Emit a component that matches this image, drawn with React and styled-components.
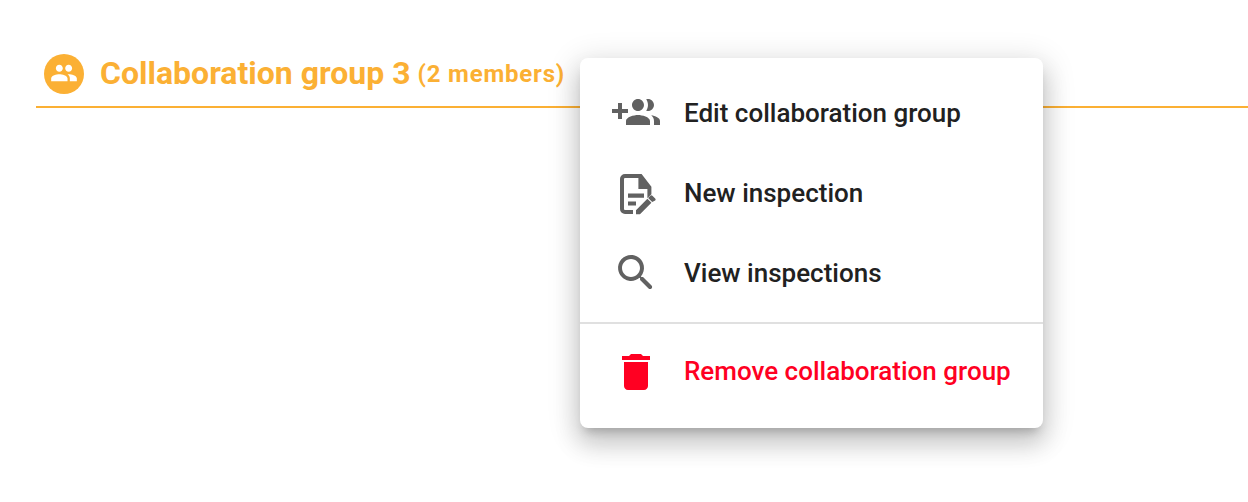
import * as React from "react"
import styled, { createGlobalStyle } from "styled-components"

const GlobalStyle = createGlobalStyle`
  html, body {
    margin: 0;
    background: #fff;
    font-family: Roboto, "Liberation Sans", sans-serif;
  }
`

const Page = styled.div`
  position: relative;
  height: 502px;
  padding: 54px 0 0 36px;
  box-sizing: border-box;
  overflow: hidden;
`

const GroupHeader = styled.div`
  display: flex;
  align-items: flex-start;
  height: 54px;
  padding: 0 0 0 8px;
  border-bottom: 2px solid #fbb034;
  box-sizing: border-box;
  color: #fbb034;
`

const Avatar = styled.div`
  width: 40px;
  height: 40px;
  border-radius: 50%;
  background: #fbb034;
  display: flex;
  align-items: center;
  justify-content: center;
  margin-right: 16px;

  svg {
    margin: -2px 1px 0 0;
  }
`

const Title = styled.span`
  font-size: 32px;
  font-weight: 700;
  line-height: 38px;
`

const Members = styled.span`
  font-size: 24px;
  font-weight: 700;
  line-height: 40px;
  margin-left: 7px;
  letter-spacing: 0.8px;
`

const Menu = styled.div`
  position: absolute;
  left: 580px;
  top: 58px;
  width: 463px;
  height: 370px;
  box-sizing: border-box;
  padding: 15px 0 17px;
  background: #fff;
  border-radius: 8px;
  box-shadow: 0 8px 10px -5px rgba(0, 0, 0, 0.2), 0 16px 24px 2px rgba(0, 0, 0, 0.14),
    0 6px 30px 5px rgba(0, 0, 0, 0.12);
`

const Item = styled.div`
  display: flex;
  align-items: center;
  height: 80px;
  padding-left: 32px;
  color: ${({ $danger }) => ($danger ? "#ff0022" : "#212121")};
`

const IconBox = styled.svg`
  width: 48px;
  height: 48px;
  margin-right: 24px;
  flex: none;
  fill: ${({ $danger }) => ($danger ? "#ff0022" : "#616161")};
`

const Label = styled.span`
  font-size: 26px;
  font-weight: 500;
  margin-bottom: ${({ $danger }) => ($danger ? "2px" : "0")};
`

const Divider = styled.div`
  height: 2px;
  margin: 9px 0 8px;
  background: #e0e0e0;
`

const Icon = ({ d, danger }) => (
  <IconBox viewBox="0 0 24 24" $danger={danger}>
    <path d={d} />
  </IconBox>
)

const icons = {
  groupAdd:
    "M8 10H5V7H3v3H0v2h3v3h2v-3h3v-2zm10 1c1.66 0 2.99-1.34 2.99-3S19.66 5 18 5c-.32 0-.63.05-.91.14.57.81.9 1.79.9 2.86s-.34 2.04-.9 2.86c.28.09.59.14.91.14zm-5 0c1.66 0 2.99-1.34 2.99-3S14.66 5 13 5s-3 1.34-3 3 1.34 3 3 3zm6.62 2.16c.83.73 1.38 1.66 1.38 2.84v2h3v-2c0-1.54-2.37-2.49-4.38-2.84zM13 13c-2 0-6 1-6 3v2h12v-2c0-2-4-3-6-3z",
  // file with lines and a pencil, not in the icon packages in this shape
  inspection:
    "M6.5 2.5H14.8L19.7 8.9V12.6L17.7 14.6V10H13.2V4.5H6.5A.5.5 0 0 0 6 5V20a.5.5 0 0 0 .5.5H10.5V22.5H6.5A2.5 2.5 0 0 1 4 20V5A2.5 2.5 0 0 1 6.5 2.5zM8 12.2H16V14.4H8zM8 16.3H12V18.3H8zM12 20.6L17.7 14.9 19.7 16.9 14 22.6H12zM18.1 14.5L19.2 13.4A.7.7 0 0 1 20.2 13.4L21.6 14.8A.7.7 0 0 1 21.6 15.8L20.1 16.5z",
  search:
    "M15.5 14h-.79l-.28-.27c1.2-1.4 1.82-3.31 1.48-5.34-.47-2.78-2.79-5-5.59-5.34-4.2-.51-7.75 3.04-7.24 7.24.34 2.8 2.56 5.12 5.34 5.59 2.03.34 3.94-.28 5.34-1.48l.27.28v.79l4.25 4.25c.41.41 1.08.41 1.49 0 .41-.41.41-1.08 0-1.49L15.5 14zm-6 0C7.01 14 5 11.99 5 9.5S7.01 5 9.5 5 14 7.01 14 9.5 11.99 14 9.5 14z",
  trash:
    "M6 19c0 1.1.9 2 2 2h8c1.1 0 2-.9 2-2V7H6v12zM19 4h-3.5l-1-1h-5l-1 1H5v2h14V4z",
}

export default function App() {
  return (
    <Page>
      <GlobalStyle />
      <GroupHeader>
        <Avatar>
          <svg width="28" height="28" viewBox="0 0 24 24" fill="#fff">
            <path d="M16 11c1.66 0 2.99-1.34 2.99-3S17.66 5 16 5c-1.66 0-3 1.34-3 3s1.34 3 3 3zm-8 0c1.66 0 2.99-1.34 2.99-3S9.66 5 8 5C6.34 5 5 6.34 5 8s1.34 3 3 3zm0 2c-2.33 0-7 1.17-7 3.5V19h14v-2.5c0-2.33-4.67-3.5-7-3.5zm8 0c-.29 0-.62.02-.97.05 1.16.84 1.97 1.97 1.97 3.45V19h6v-2.5c0-2.33-4.67-3.5-7-3.5z" />
          </svg>
        </Avatar>
        <Title>Collaboration group 3</Title>
        <Members>(2 members)</Members>
      </GroupHeader>

      <Menu>
        <Item>
          <Icon d={icons.groupAdd} />
          <Label>Edit collaboration group</Label>
        </Item>
        <Item>
          <Icon d={icons.inspection} />
          <Label>New inspection</Label>
        </Item>
        <Item>
          <Icon d={icons.search} />
          <Label>View inspections</Label>
        </Item>
        <Divider />
        <Item $danger>
          <Icon d={icons.trash} danger />
          <Label $danger>Remove collaboration group</Label>
        </Item>
      </Menu>
    </Page>
  )
}
